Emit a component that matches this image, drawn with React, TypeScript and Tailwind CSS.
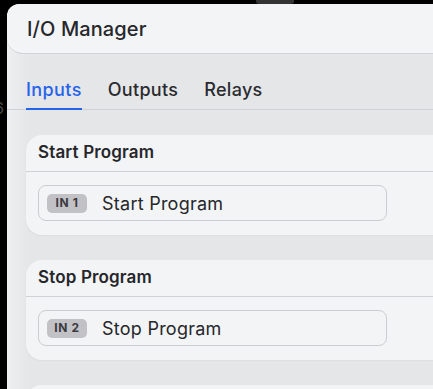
import React, { useState } from 'react';

interface InputCardProps {
    title: string;
    code: string;
    label: string;
}

const InputCard: React.FC<InputCardProps> = ({ title, code, label }) => {
    return (
        <div className="rounded-[16px] bg-[#f3f4f6] shadow-[0_1px_2px_rgba(0,0,0,0.04)]">
            <div className="h-[37px] flex items-center px-[12px] border-b border-[#cfd1d5]">
                <h3 className="text-[17px] font-semibold tracking-[0.15px] text-[#26272b]">{title}</h3>
            </div>
            <div className="px-[12px] pt-[13px] pb-[14px]">
                <div className="w-[349px] h-[36px] flex items-center gap-[15px] pl-[8px] rounded-[8px] border border-[#cbcccf]">
                    <span className="w-[40px] h-[19px] flex items-center justify-center rounded-[5px] bg-[#c2c2c6] text-[12px] font-bold tracking-[0.6px] text-[#3a3a3f]">
                        {code}
                    </span>
                    <span className="text-[18px] tracking-[0.25px] text-[#26272b]">{label}</span>
                </div>
            </div>
        </div>
    );
};

const App: React.FC = () => {
    const [tab, setTab] = useState('Inputs');
    const tabs = ['Inputs', 'Outputs', 'Relays'];

    return (
        <div className="relative w-[433px] h-[389px] overflow-hidden bg-black font-['Inter',sans-serif]">
            {/* bits of the window behind */}
            <div className="absolute top-0 left-[256px] w-[38px] h-[4px] rounded-b-[3px] bg-[#333]" />
            <span className="absolute left-[-6px] top-[96px] text-[16px] text-[#4a4a4a]">6</span>

            <div className="relative ml-[7px] mt-[4px] w-[480px] h-[400px] rounded-tl-[12px] overflow-hidden bg-[linear-gradient(to_right,#eeeff1,#e5e6e8_22px)]">
                <div className="h-[50px] flex items-center px-[20px] bg-[#f3f4f6] rounded-tl-[12px] rounded-bl-[16px] border-b border-[#d1d3d7]">
                    <h2 className="text-[20px] font-medium tracking-[0.1px] text-[#26272b]">I/O Manager</h2>
                </div>

                <div className="flex gap-[26px] px-[19px] pt-[24px] border-b border-[#cfd1d5]">
                    {tabs.map((t) => (
                        <button
                            key={t}
                            onClick={() => setTab(t)}
                            className={
                                t === tab
                                    ? 'pb-[6px] -mb-px border-b-2 border-[#2563eb] text-[18px] leading-[24px] tracking-[0.4px] font-medium text-[#2563eb]'
                                    : 'pb-[6px] -mb-px border-b-2 border-transparent text-[18px] leading-[24px] tracking-[0.3px] font-medium text-[#2a2b2f]'
                            }
                        >
                            {t}
                        </button>
                    ))}
                </div>

                <div className="flex flex-col gap-[25px] px-[19px] pt-[25px]">
                    <InputCard title="Start Program" code="IN 1" label="Start Program" />
                    <InputCard title="Stop Program" code="IN 2" label="Stop Program" />
                    <InputCard title="Pause Program" code="IN 3" label="Pause Program" />
                </div>
            </div>
        </div>
    );
};

export default App;
